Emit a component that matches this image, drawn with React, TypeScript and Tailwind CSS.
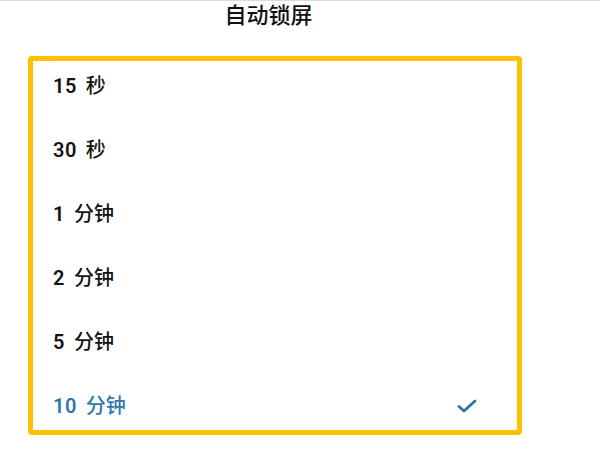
import * as React from "react";

const options = [
  { n: "15", u: "秒" },
  { n: "30", u: "秒" },
  { n: "1", u: "分钟" },
  { n: "2", u: "分钟" },
  { n: "5", u: "分钟" },
  { n: "10", u: "分钟" },
];
const selected = "10";

function Check(): React.JSX.Element {
  return (
    <svg width="20" height="14" viewBox="0 0 20 14" fill="none" className="text-[#2f74a8]">
      <path d="M2 7.5 L7 12 L18 2" stroke="currentColor" strokeWidth="2.8" strokeLinecap="round" strokeLinejoin="round" />
    </svg>
  );
}

export default function App(): React.JSX.Element {
  return (
    <div
      className="w-[600px] h-[450px] bg-white border-t border-[#dcdcdc] overflow-hidden"
      style={{ fontFamily: 'Roboto, "Noto Sans CJK SC", "Noto Sans", sans-serif' }}
    >
      <div className="w-[537px] h-[30px] leading-[30px] text-center text-[22px] font-medium text-[#111]">
        自动锁屏
      </div>
      <div className="mt-[25px] ml-[28px] w-[494px] h-[379px] border-[5px] border-[#ffc000] rounded-[4px] flex flex-col gap-4 pt-px">
        {options.map((o) => {
          const isSel = o.n === selected;
          return (
            <div key={o.n} className="h-12 flex items-center justify-between pl-5 pr-10">
              <span
                className={"flex items-center text-[20px] " + (isSel ? "text-[#2f77ad]" : "text-[#141414]")}
              >
                <span className="font-semibold tracking-[0.5px]">{o.n}</span>
                <span className="font-medium ml-[9px]">{o.u}</span>
              </span>
              {isSel && <Check />}
            </div>
          );
        })}
      </div>
    </div>
  );
}
